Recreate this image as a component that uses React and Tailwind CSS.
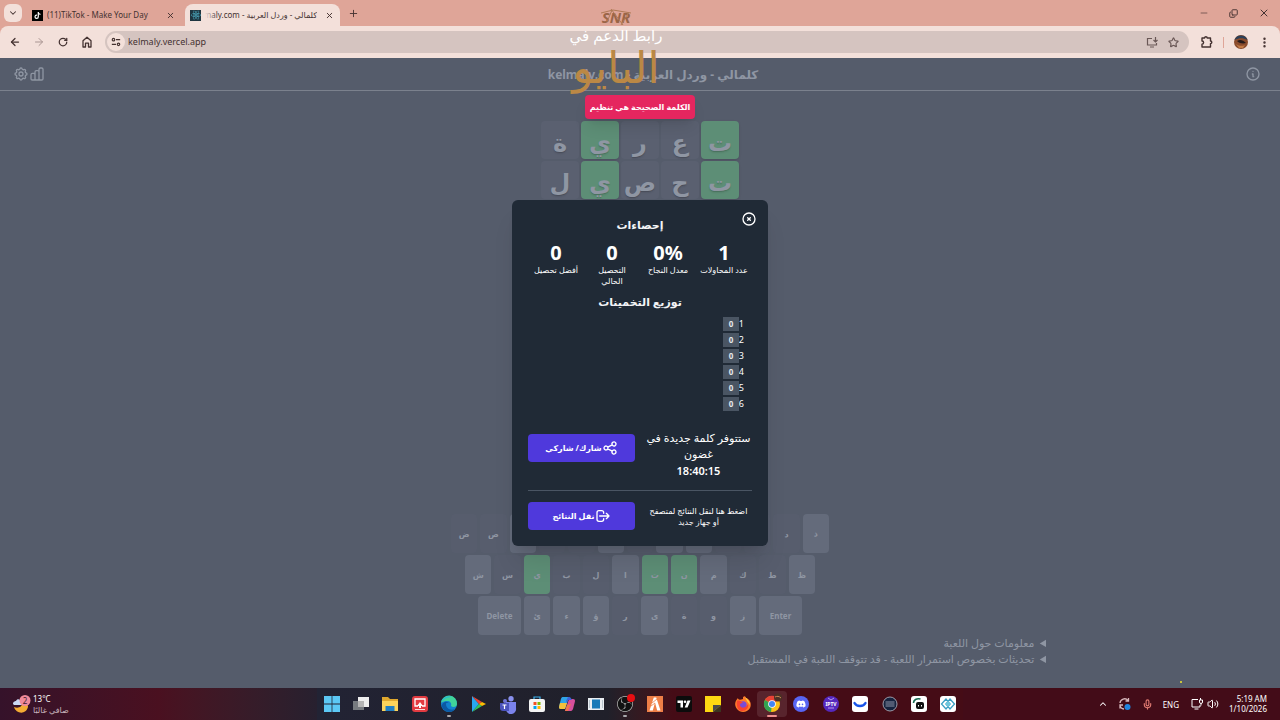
import {
  ArrowLeft, ArrowRight, ChevronDown, ChevronUp, Copy, EllipsisVertical, Mic, Minus, Plus, RotateCw, Star, Volume2, X,
} from "lucide-react";
import { FaDiscord, FaReact, FaTiktok } from "react-icons/fa6";
import {
  HiOutlineChartBar, HiOutlineCog, HiOutlineInformationCircle, HiOutlineLogout, HiOutlineShare, HiOutlineXCircle,
} from "react-icons/hi";
import { SiObsstudio } from "react-icons/si";

const guesses = [
  [["ت", true], ["ع"], ["ر"], ["ي", true], ["ة"]],
  [["ت", true], ["ح"], ["ص"], ["ي", true], ["ل"]],
];

const correct = "يتن";
const absent = "ضصقفعحجدسبلكطرةو";

const keyRows = ["ضصثقفغعهخحجدذ", "شسيبلاتنمكطظ", "ئءؤرىةوز"];

const stats = [
  ["1", "عدد المحاولات"],
  ["0%", "معدل النجاح"],
  ["0", "التحصيل الحالي"],
  ["0", "أفضل تحصيل"],
];

function Tab({ icon, title, active, rtl }) {
  return (
    <div className={active ? "flex h-[22px] w-[155px] items-center gap-1 rounded-t-lg bg-[#f3e0da] pl-[5px] pr-[2px]" : "flex h-[22px] w-[159px] items-center gap-1 pl-[9px] pr-[2px]"}>
      {icon}
      <button type="button" dir={rtl ? "rtl" : "ltr"} className={rtl ? "relative flex-1 overflow-hidden whitespace-nowrap text-right text-[8px] leading-[14px]" : "flex-1 overflow-hidden whitespace-nowrap text-left text-[8px] leading-[14px]"}>
        {title}
        {rtl && <span className="absolute left-0 top-0 h-full w-3 bg-linear-to-r from-[#f3e0da] to-[#f3e0da]/0" />}
      </button>
      <button type="button" aria-label="Close tab" className="p-1">
        <X size={9} strokeWidth={2.5} />
      </button>
    </div>
  );
}

function Browser() {
  return (
    <div className="bg-[#dfa598] text-[#443231]">
      <div className="flex h-[26px] items-end pl-1 pr-[10px]">
        <button type="button" aria-label="Search tabs" className="mb-1 flex h-[18px] w-[18px] items-center justify-center rounded-md bg-[#f3e0da]">
          <ChevronDown size={10} strokeWidth={2.5} />
        </button>
        <Tab
          title="(11)TikTok - Make Your Day"
          icon={<span className="ml-px flex h-[11px] w-[11px] items-center justify-center bg-black text-white"><FaTiktok size={7} /></span>}
        />
        <div className="w-1" />
        <Tab
          active
          rtl
          title="كلمالي - وردل العربية - kelmaly.com"
          icon={<span className="flex h-[11px] w-[11px] shrink-0 items-center justify-center bg-[#1f3540] text-[#4fb3c9]"><FaReact size={10} /></span>}
        />
        <button type="button" aria-label="New tab" className="mb-[3px] ml-1 p-1">
          <Plus size={11} strokeWidth={2} />
        </button>
        <div className="mb-[7px] ml-auto flex items-center gap-[20px]">
          <button type="button" aria-label="Minimize"><Minus size={10} strokeWidth={1.5} /></button>
          <button type="button" aria-label="Restore"><Copy size={9} strokeWidth={2.5} className="-scale-x-100 rotate-180" /></button>
          <button type="button" aria-label="Close window"><X size={12} strokeWidth={2} /></button>
        </div>
      </div>
      <div className="flex h-[32px] items-center rounded-t-lg bg-[#f3e0da] pl-[9px] pr-[9px]">
        <div className="flex w-[96px] items-center gap-[12px]">
          <button type="button" aria-label="Back"><ArrowLeft size={12} strokeWidth={2.5} /></button>
          <button type="button" aria-label="Forward" className="text-[#a99592]"><ArrowRight size={12} /></button>
          <button type="button" aria-label="Reload"><RotateCw size={12} strokeWidth={3} className="p-px" /></button>
          <button type="button" aria-label="Home">
            <svg width="12" height="12" viewBox="0 0 12 12" fill="none" stroke="currentColor" strokeWidth="1.3" strokeLinejoin="round">
              <path d="M2 4.800 6 1.200l4 3.600V11H7.500V7.200h-3V11H2z" />
            </svg>
          </button>
        </div>
        <div className="flex h-[22px] flex-1 items-center rounded-full bg-[#d5c4c0] pl-[2px] pr-[10px]">
          <button type="button" aria-label="Site information" className="flex h-[18px] w-[18px] items-center justify-center rounded-full bg-[#f3e0da]">
            <svg width="10" height="10" viewBox="0 0 12 12" fill="none" stroke="currentColor" strokeWidth="1.4">
              <circle cx="3" cy="3.2" r="1.5" />
              <path d="M6 3.200h5M1 8.800h5" />
              <circle cx="9" cy="8.8" r="1.5" />
            </svg>
          </button>
          <input aria-label="Address" defaultValue="kelmaly.vercel.app" className="ml-[3px] min-w-0 flex-1 bg-transparent text-[9px] outline-none" />
          <div className="flex items-center gap-[10px] text-[#6a5856]">
            <button type="button" aria-label="Install app">
              <svg width="12" height="11" viewBox="0 0 12 11" fill="none" stroke="currentColor" strokeWidth="1.2">
                <path d="M6 1.500H1.500v6.500h9V6M4 10h4M9.500 0v4.500M7.500 3l2 2 2-2" />
              </svg>
            </button>
            <button type="button" aria-label="Bookmark"><Star size={11} strokeWidth={2.5} /></button>
          </div>
        </div>
        <div className="flex items-center gap-[10px] pl-[12px]">
          <button type="button" aria-label="Extensions">
            <svg width="12" height="12" viewBox="0 0 12 12" fill="none" stroke="currentColor" strokeWidth="1.4" strokeLinejoin="round">
              <path d="M1 2h2.600a1.300 1.300 0 0 1 2.600 0H9.500v3a1.300 1.300 0 0 1 0 2.600V11H1V8.200a1.500 1.500 0 0 0 0-3.200z" />
            </svg>
          </button>
          <span className="h-[11px] w-px bg-[#dfa598]" />
          <button type="button" aria-label="Profile">
            <svg width="14" height="14" viewBox="0 0 14 14">
              <circle cx="7" cy="7" r="7" fill="#8a4b2c" />
              <path d="M.5 5a7 7 0 0 1 13 0C9 2.500 5 3 .5 5z" fill="#2c4058" />
              <path d="M3 6c3-2 6-1 9 2-3 1-6 .6-9-2z" fill="#261b1b" />
              <path d="M2 9c3 2 6 2.500 9 1l-2 3H5z" fill="#c27a45" />
            </svg>
          </button>
          <button type="button" aria-label="Menu"><EllipsisVertical size={13} strokeWidth={2.5} /></button>
        </div>
      </div>
    </div>
  );
}

function Key({ label, wide }) {
  const size = wide ? "w-[44px]" : "w-[27px]";
  const tone = correct.includes(label) ? "bg-[#5d8e76]" : absent.includes(label) ? "bg-[#575d6d]" : "bg-[#646b7b]";
  return (
    <button type="button" className={`${size} ${tone} h-[39px] shrink rounded-sm text-[8px] font-bold text-[#8f96a3]`}>
      {label}
    </button>
  );
}

function Keyboard() {
  return (
    <div dir="ltr" className="flex flex-col items-center gap-[2px]">
      <div className="flex w-[378px] gap-[3px]">{[...keyRows[0]].map((k) => <Key key={k} label={k} />)}</div>
      <div className="flex w-[350px] gap-[3px]">{[...keyRows[1]].map((k) => <Key key={k} label={k} />)}</div>
      <div className="flex w-[324px] gap-[3px]">
        <Key label="Delete" wide />
        {[...keyRows[2]].map((k) => <Key key={k} label={k} />)}
        <Key label="Enter" wide />
      </div>
    </div>
  );
}

function StatsModal() {
  return (
    <div role="dialog" aria-label="إحصاءات" className="relative w-64 rounded-md bg-[#202a36] p-4 text-center text-white shadow-xl">
      <button type="button" aria-label="Close" className="absolute right-[11px] top-[11px]">
        <HiOutlineXCircle size={16} />
      </button>
      <h2 className="text-[11px] leading-[18px] font-bold text-gray-100">إحصاءات</h2>
      <div className="mt-2 grid grid-cols-4">
        {stats.map(([value, label]) => (
          <div key={label}>
            <div className="text-[20px] leading-[22px] font-bold">{value}</div>
            <div className="px-[3px] text-[8px] leading-[11px] font-medium">{label}</div>
          </div>
        ))}
      </div>
      <h2 className="mt-[7px] text-[11px] leading-[18px] font-bold text-gray-100">توزيع التخمينات</h2>
      <div className="mt-[5px] px-2 text-[9px] leading-[16px]">
        {[1, 2, 3, 4, 5, 6].map((n) => (
          <div key={n} className="flex items-center">
            <span className="w-[5px]">{n}</span>
            <span className="flex h-[14px] w-[16px] items-center justify-center bg-[#4a5563] text-[8px] font-bold text-gray-200">0</span>
          </div>
        ))}
      </div>
      <div className="mt-[18px] grid grid-cols-2 items-start gap-[10px]">
        <div className="text-[11px] leading-[16px]">
          <p>ستتوفر كلمة جديدة في غضون</p>
          <time className="block leading-[18px] font-semibold">18:40:15</time>
        </div>
        <button type="button" className="mt-[4px] flex h-[28px] items-center justify-center rounded bg-[#4f39dc] text-[8px] font-bold">
          <HiOutlineShare size={16} />
          شارك/ شاركي
        </button>
      </div>
      <hr className="mt-[10px] border-[#4a5563]" />
      <div className="mt-[11px] grid grid-cols-2 items-center gap-[10px]">
        <p className="px-[3px] text-[8px] leading-[11px] font-medium">اضغط هنا لنقل النتائج لمتصفح أو جهاز جديد</p>
        <button type="button" className="flex h-[28px] items-center justify-center rounded bg-[#4f39dc] text-[8px] font-bold">
          <HiOutlineLogout size={16} />
          نقل النتائج
        </button>
      </div>
    </div>
  );
}

function Game() {
  return (
    <main dir="rtl" className="relative flex flex-1 flex-col bg-[#555c6b] text-[#8f96a3]">
      <header dir="ltr" className="flex h-[33px] items-center border-b border-[#7b818d] pl-[13px] pr-[19px]">
        <button type="button" aria-label="Settings"><HiOutlineCog size={16} /></button>
        <button type="button" aria-label="Statistics"><HiOutlineChartBar size={16} /></button>
        <h1 dir="rtl" className="flex-1 pt-[2px] pr-0 pl-4 text-center text-[12px] font-bold">كلمالي - وردل العربية - kelmaly.com</h1>
        <button type="button" aria-label="Info"><HiOutlineInformationCircle size={16} /></button>
      </header>
      <div className="mt-[30px] flex flex-1 flex-col items-center gap-[2px]">
        {guesses.map((row, i) => (
          <div key={i} className="flex gap-[2px]">
            {row.map(([letter, hit], j) => (
              <div key={j} className={hit ? "flex h-[38px] w-[38px] items-center justify-center rounded-sm bg-[#5d8e76] pt-[3px] text-[24px] font-bold shadow-sm text-shadow-sm" : "flex h-[38px] w-[38px] items-center justify-center rounded-sm bg-[#5a6070] pt-[3px] text-[24px] font-bold text-shadow-sm"}>
                {letter}
              </div>
            ))}
          </div>
        ))}
      </div>
      <Keyboard />
      <div className="mx-auto mb-[21px] w-[812px] text-[11px] leading-[16px]">
        <details>
          <summary>معلومات حول اللعبة</summary>
        </details>
        <details>
          <summary>تحديثات بخصوص استمرار اللعبة - قد تتوقف اللعبة في المستقبل</summary>
        </details>
      </div>
      <div className="absolute inset-0 flex items-center justify-center">
        <StatsModal />
      </div>
      <div className="absolute inset-x-0 top-[37px] flex justify-center">
        <p role="alert" className="flex h-[24px] items-center rounded bg-[#e5265f] px-[5px] text-[8px] font-bold text-white shadow-lg">الكلمة الصحيحة هي تنظيم</p>
      </div>
      <span className="absolute right-[98px] bottom-[5px] h-[2px] w-[2px] bg-[#c9c33c]" />
    </main>
  );
}

// Pinned apps, drawn on a 16 unit grid
const apps = [
  ["Start", <path d="M0 0h7.600v7.600H0zM8.400 0H16v7.600H8.400zM0 8.400h7.600V16H0zM8.400 8.400H16V16H8.400z" fill="#5cc8f5" />],
  ["Task view", <><path d="M5 1h11v10H5z" fill="#eeeeee" /><path d="M0 5h11v9H0z" fill="#777b80" /><path d="M5 5h6v6H5z" fill="#b5b5b5" /></>],
  ["File Explorer", <><path d="M0 1h6l2 2h8v12H0z" fill="#e0a82e" /><path d="M0 5h16v10H0z" fill="#fbd35b" /><path d="M3.500 10h9v5h-9z" fill="#1f7fc4" /></>],
  ["Screen", <><rect width="16" height="16" rx="3" fill="#e23b41" /><path d="M6 10H3V3h10v7h-3" fill="none" stroke="#fff" strokeWidth="1.300" /><path d="M8 6l3 4H9v2H7v-2H5z" fill="#fff" /><path d="M3 13.500h10" stroke="#fff" strokeWidth=".8" /></>],
  ["Edge", <><circle cx="8" cy="8" r="8" fill="#1382cf" /><path d="M0 7a8 8 0 0 1 16 1c0 3-4 4-6 2 1-3-1-5-4-5-3 0-5 1-6 2z" fill="#41d49a" /><path d="M0 7a8 8 0 0 1 11-6C6 1 2 3 0 7z" fill="#2bb5d8" /><path d="M5 8c0 4 4 7 9 5-4 5-11 3-13-2-1-4 4-7 7-4-2-.5-3 0-3 1z" fill="#0c59a4" /></>, "run"],
  ["Play", <><path d="M2 0l7 8-7 8z" fill="#28a8f0" /><path d="M2 0l10 6-3 2z" fill="#ea4335" /><path d="M2 16l10-6-3-2z" fill="#35c45c" /><path d="M12 6l4 2-4 2-3-2z" fill="#fbbc04" /></>],
  ["Teams", <><circle cx="5" cy="5" r="2" fill="#6f75d6" /><circle cx="11" cy="2.800" r="2.700" fill="#8a91ee" /><path d="M6 6h10v6a4 4 0 0 1-10 2z" fill="#7b83eb" /><path d="M0 7h9v8H3a3 3 0 0 1-3-3z" fill="#4b53bc" /><path d="M2.500 9h4M4.500 9v4" stroke="#fff" strokeWidth="1.200" /></>],
  ["Store", <><path d="M5 4V1h6v3" fill="none" stroke="#3bb1ee" strokeWidth="1.200" /><rect y="3" width="16" height="13" rx="2" fill="#f4f4f4" /><path d="M4.500 6h3v3h-3z" fill="#f25022" /><path d="M8.500 6h3v3h-3z" fill="#7fba00" /><path d="M4.500 10h3v3h-3z" fill="#00a4ef" /><path d="M8.500 10h3v3h-3z" fill="#ffb900" /></>],
  ["Copilot", <><path d="M4 1h6L6 13H2c-3 0-2-3-1-6 1-4 1-6 3-6z" fill="#2fa4e7" /><path d="M1 7l-1 4c0 2 1 2 3 2h3l2-6z" fill="#f4c03b" /><path d="M10 3h4c3 0 2 3 1 6-1 4-1 6-4 6H6z" fill="#d64f9c" /><path d="M9 1h1c2 0 2 2 3 3H9L8 7 7 5z" fill="#3f62d8" /><path d="M6 15l2-6 4-1-3 7z" fill="#f0744d" /></>],
  ["Viewer", <><path d="M0 2h16v12H0z" fill="#e9eef2" /><path d="M4 3.500h8v9H4z" fill="#1779b8" /><path d="M1.500 4v8M14.500 4v8" stroke="#b8c4cc" /></>],
  ["OBS", <><circle cx="8" cy="8" r="8" fill="#111" /><g color="#b8b8b8"><SiObsstudio size={16} /></g><circle cx="14" cy="2" r="4" fill="#e80e12" /></>, "run"],
  ["FiveM", <><path d="M0 0h16v16H0z" fill="#ee7f47" /><path d="M6.800 1.500h2.400L13.500 14.500h-3.300L8 6.500 5.800 14.500H2.500z" fill="#fff" /><path d="M5 7l5-4M4 10l4-3" stroke="#ee7f47" strokeWidth=".8" /></>],
  ["TradingView", <><rect width="16" height="16" rx="2" fill="#0c0c0c" /><path d="M1.500 4.500h5.500v7H4.500V7h-3zM11.500 4.500h3l-3 7H8.700z" fill="#fff" /><circle cx="9" cy="5.800" r="1.300" fill="#fff" /></>],
  ["Sticky Notes", <><path d="M0 0h16v16H0z" fill="#fdd812" /><path d="M8 16V9h8z" fill="#4a4a4a" /><path d="M8 16l8-7v7z" fill="#3a3420" /></>],
  ["Firefox", <><path d="M8 1c2-1 2-1 3 1 4 1 6 6 4 10-3 5-10 5-13 1C-1 9 0 5 3 2c0 2 2 2 5 1z" fill="#ff7b2a" /><path d="M10 1c3 2 5 5 5 8l-3-4z" fill="#ffd43d" /><circle cx="8" cy="9" r="3.700" fill="#7a4bd6" /><path d="M2 5c2-1 4 0 6 2-3 0-4 2-2 4 3 2 6-1 7-3 1 4-2 7-6 7s-6-5-5-10z" fill="#f9442f" /></>],
  ["Chrome", <><circle cx="8" cy="8" r="8" fill="#fbc116" /><path d="M8 8 1 4a8 8 0 0 1 14 0z" fill="#e94235" /><path d="M8 8 1 4a8 8 0 0 0 6 12z" fill="#32a352" /><circle cx="8" cy="8" r="3.800" fill="#fff" /><circle cx="8" cy="8" r="3" fill="#4285f4" /><circle cx="14" cy="1.500" r="4" fill="#4b3025" /><path d="M11 1c2-1 4-1 6 1" fill="none" stroke="#c98754" /></>, "active"],
  ["Discord", <><circle cx="8" cy="8" r="8" fill="#5865f2" /><g transform="translate(3 3)" color="#fff"><FaDiscord size={10} /></g></>],
  ["IPTV", <><circle cx="8" cy="8" r="8" fill="#5528bd" /><text x="8" y="10" textAnchor="middle" fontSize="5" fontWeight="700" fill="#fff">IPTV</text><path d="M5 2l3 2 3-2M5 12h6" fill="none" stroke="#b69aef" /></>],
  ["Curve", <><rect width="16" height="16" rx="3" fill="#fff" /><path d="M2.500 7c2 4 9 4 11 0" fill="none" stroke="#1753e8" strokeWidth="2.400" strokeLinecap="round" /></>],
  ["Player", <><circle cx="8" cy="8" r="7" fill="#16233e" stroke="#b8bdc8" strokeWidth=".8" /><path d="M3.500 6h9M3.500 8h9M3.500 10h9" stroke="#8b93a8" strokeWidth="1.100" /></>],
  ["Bot", <><rect width="16" height="16" rx="3" fill="#fff" /><rect x="5" y="6" width="8" height="7" rx="2" fill="#101010" /><path d="M2.500 7c0-3 3-5 7-4" fill="none" stroke="#156b52" strokeWidth="1.600" /><path d="M7.500 9v1.500M10.500 9v1.500" stroke="#fff" /></>],
  ["Diamond", <><rect width="16" height="16" rx="3" fill="#fff" /><path d="M6 3 1.500 8 6 13l4-5zM10 3l4.500 5L10 13 6 8z" fill="none" stroke="#3a9fc4" strokeWidth="1.300" /><path d="M8 5l3 3-3 3-3-3z" fill="#6fc7dd" /></>],
];

function Taskbar() {
  return (
    <footer className="flex h-8 items-center justify-between bg-linear-to-r from-[#3c1225] via-[#202030] via-50% to-[#420c18] to-52% text-[8px] leading-[11px] text-white">
      <button type="button" className="flex w-[317px] items-center gap-[2px] self-stretch bg-linear-to-r from-[#35122a] via-[#4a1020] to-[#27202f] pl-3 text-left">
        <svg width="19" height="19" viewBox="0 0 19 19">
          <path d="M10 7c1 4-3 7-8 5 2 7 12 8 14 0 0-3-2-5-6-5z" fill="#f4ac34" />
          <path d="M1 9c0-3 3-3 3-3 1-3 5-2 5 1 2 1 1 3 0 3H2z" fill="#cbd9f5" />
          <circle cx="13" cy="5.500" r="5.500" fill="#f08a9b" />
          <text x="13" y="8.500" textAnchor="middle" fontSize="8" fill="#402030">2</text>
        </svg>
        <span>
          <span className="block">13°C</span>
          <span dir="rtl" className="block text-[#c9b5bd]">صافي غالبًا</span>
        </span>
      </button>
      <nav className="grid w-[646px] grid-cols-22 self-stretch bg-linear-to-r from-[#222334] via-[#20202a] via-45% to-[#450c16] to-55%">
        {apps.map(([name, art, state]) => (
          <button key={name} type="button" aria-label={name} className={state === "active" ? "relative my-[3px] flex items-center justify-center rounded bg-white/10" : "relative my-[3px] flex items-center justify-center"}>
            <svg width="16" height="16" viewBox="0 0 16 16" overflow="visible">{art}</svg>
            {state === "run" && <span className="absolute bottom-0 h-[2px] w-1 rounded bg-[#a8a8ac]" />}
            {state === "active" && <span className="absolute bottom-0 h-[2px] w-[10px] rounded bg-[#f0918f]" />}
          </button>
        ))}
      </nav>
      <div className="flex w-[317px] items-center justify-end gap-[10px] self-stretch bg-[#430c18] pr-[13px]">
        <ChevronUp size={10} strokeWidth={2.5} />
        <svg width="14" height="14" viewBox="0 0 14 14" fill="none" stroke="#d8b9bd" strokeWidth="1.300">
          <path d="M2 6a4.500 4.500 0 0 1 8-2.500M10.500 1v3h-3M2 8a4.500 4.500 0 0 0 4 4M2 11.500V8h3" />
          <circle cx="9.500" cy="10" r="3" fill="#2085e0" stroke="none" />
        </svg>
        <Mic size={11} strokeWidth={2.5} className="text-[#e07a72]" />
        <span>ENG</span>
        <span className="ml-[2px] flex items-center gap-1">
          <svg width="12" height="12" viewBox="0 0 12 12" fill="none" stroke="currentColor">
            <path d="M7 1.500H1v7.500h8V7M3.500 11h4M9.500 0v2M8.500 2h3v2a1.500 1.500 0 0 1-3 0zM10 5.500v2" />
          </svg>
          <Volume2 size={12} />
        </span>
        <span className="text-right leading-[10px]">
          <span className="block">5:19 AM</span>
          <span className="block">1/10/2026</span>
        </span>
      </div>
    </footer>
  );
}

function Watermark() {
  return (
    <div dir="rtl" className="pointer-events-none absolute inset-x-0 top-[7px] flex justify-center pr-[48px] text-center">
      <div>
        <div className="relative text-[15px] leading-[20px] font-bold text-[#9a6548] italic">
          SNR
          <svg className="absolute inset-x-0 top-0 mx-auto" width="34" height="20" viewBox="0 0 34 20" fill="none" stroke="#b07a55" strokeWidth="1">
            <path d="M2 6 14 3 32 6M12 2l12 16M8 15l5-12M30 5 22 18" />
          </svg>
        </div>
        <div className="text-[15px] leading-[16px] whitespace-nowrap text-white">رابط الدعم في</div>
        <div className="text-[44px] leading-[46px] whitespace-nowrap text-[#bb8845]">البايو</div>
      </div>
    </div>
  );
}

export default function App() {
  return (
    <div className="relative flex min-h-screen flex-col overflow-hidden font-['Noto_Sans','DejaVu_Sans',sans-serif]">
      <Browser />
      <Game />
      <Taskbar />
      <Watermark />
    </div>
  );
}
